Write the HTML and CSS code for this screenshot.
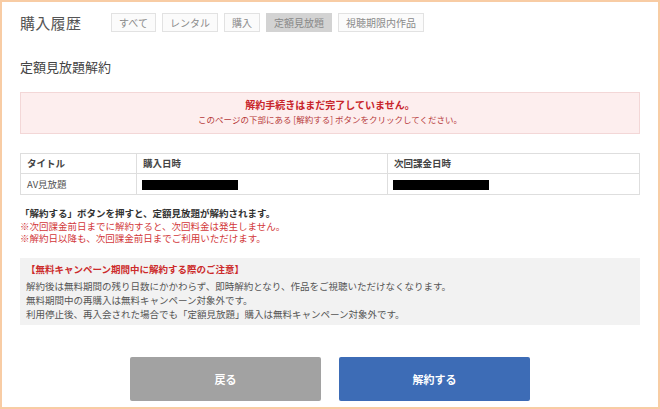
FILE: index.html
```html
<!DOCTYPE html>
<html lang="ja">
<head>
<meta charset="utf-8">
<title>定額見放題解約</title>
<link rel="stylesheet" href="styles.css">
</head>
<body>
<div class="frame">
  <div class="header">
    <h1 class="title">購入履歴</h1>
    <ul class="tabs">
      <li class="tab">すべて</li>
      <li class="tab">レンタル</li>
      <li class="tab">購入</li>
      <li class="tab active">定額見放題</li>
      <li class="tab">視聴期限内作品</li>
    </ul>
  </div>

  <h2 class="subtitle">定額見放題解約</h2>

  <div class="alert">
    <p class="alert-title">解約手続きはまだ完了していません。</p>
    <p class="alert-text">このページの下部にある [解約する] ボタンをクリックしてください。</p>
  </div>

  <table class="info">
    <tr>
      <th class="c1">タイトル</th>
      <th class="c2">購入日時</th>
      <th class="c3">次回課金日時</th>
    </tr>
    <tr>
      <td>AV見放題</td>
      <td><span class="redact"></span></td>
      <td><span class="redact"></span></td>
    </tr>
  </table>

  <div class="notes">
    <p class="note-main">「解約する」ボタンを押すと、定額見放題が解約されます。</p>
    <p class="note-red">※次回課金前日までに解約すると、次回料金は発生しません。</p>
    <p class="note-red">※解約日以降も、次回課金前日までご利用いただけます。</p>
  </div>

  <div class="caution">
    <p class="caution-title">【無料キャンペーン期間中に解約する際のご注意】</p>
    <p>解約後は無料期間の残り日数にかかわらず、即時解約となり、作品をご視聴いただけなくなります。</p>
    <p>無料期間中の再購入は無料キャンペーン対象外です。</p>
    <p>利用停止後、再入会された場合でも「定額見放題」購入は無料キャンペーン対象外です。</p>
  </div>

  <div class="actions">
    <a class="btn btn-back">戻る</a>
    <a class="btn btn-cancel">解約する</a>
  </div>
</div>
</body>
</html>
```

FILE: styles.css
```css
html, body {
  margin: 0;
  padding: 0;
  background: #ffffff;
}

body {
  font-family: "Noto Sans CJK JP", "Noto Sans", "Liberation Sans", sans-serif;
  color: #555;
}

p, h1, h2, ul {
  margin: 0;
  padding: 0;
}

.frame {
  box-sizing: border-box;
  width: 660px;
  height: 409px;
  border: 2px solid #f8cca4;
  padding: 0 18px;
}

.header {
  display: flex;
  align-items: center;
  padding-top: 10px;
  height: 21px;
}

.title {
  width: 91px;
  font-size: 15px;
  font-weight: normal;
  line-height: 21px;
  color: #555;
  letter-spacing: 0.3px;
}

.tabs {
  list-style: none;
  display: flex;
  gap: 6px;
}

.tab {
  box-sizing: border-box;
  height: 19px;
  line-height: 17px;
  padding: 0 7px;
  font-size: 10px;
  color: #8a8a8a;
  background: #fbfbfb;
  border: 1px solid #e2e2e2;
}

.tab.active {
  background: #d3d3d3;
  border-color: #d3d3d3;
  color: #888;
}

.subtitle {
  margin-top: 26px;
  font-size: 13px;
  font-weight: normal;
  line-height: 16px;
  color: #444;
}

.alert {
  margin-top: 17px;
  box-sizing: border-box;
  height: 42px;
  padding-top: 5px;
  background: #fdeeee;
  border: 1px solid #f3d7d7;
  text-align: center;
}

.alert-title {
  font-size: 10px;
  line-height: 14px;
  font-weight: bold;
  color: #c8252b;
}

.alert-text {
  font-size: 8.5px;
  line-height: 15px;
  color: #b73a3a;
}

.info {
  margin-top: 19px;
  width: 620px;
  border-collapse: collapse;
  font-size: 9.5px;
  table-layout: fixed;
}

.info th, .info td {
  border: 1px solid #dedede;
  text-align: left;
  padding: 0 6px;
  height: 19px;
  line-height: 19px;
}

.info th {
  font-weight: bold;
  color: #444;
}

.info td {
  color: #555;
  height: 20px;
}

.c1 { width: 103px; }
.c2 { width: 238px; }

.redact {
  display: inline-block;
  width: 96px;
  height: 10px;
  background: #000;
  vertical-align: middle;
  margin-left: -1px;
}

.notes {
  margin-top: 12px;
  font-size: 9.5px;
  line-height: 12.5px;
}

.note-main {
  color: #333;
  font-weight: bold;
}

.note-red {
  color: #d2383a;
}

.caution {
  margin-top: 13px;
  box-sizing: border-box;
  height: 67px;
  padding: 4px 6px 0;
  background: #f2f2f2;
  font-size: 9.5px;
  line-height: 14px;
  color: #555;
}

.caution-title {
  color: #cc2a2a;
  font-weight: bold;
  margin-bottom: 3px;
}

.actions {
  margin-top: 32px;
  display: flex;
  justify-content: center;
  gap: 18px;
}

.btn {
  box-sizing: border-box;
  width: 191px;
  height: 44px;
  display: flex;
  align-items: center;
  justify-content: center;
  font-size: 11px;
  font-weight: bold;
  color: #fff;
  border-radius: 2px;
}

.btn-back {
  background: #a2a2a2;
}

.btn-cancel {
  background: #3d6cb6;
}
```
